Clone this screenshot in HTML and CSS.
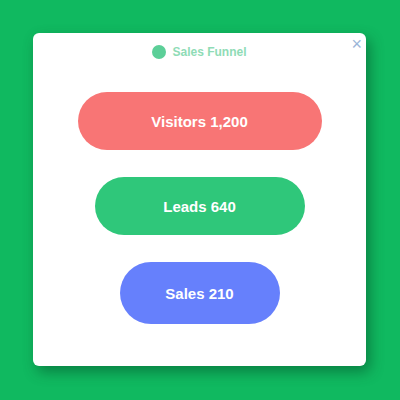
FILE: index.html
```html
<!DOCTYPE html>
<html>
<head>
<meta charset="utf-8">
<link rel="stylesheet" href="styles.css">
</head>
<body>
<div class="frame">
  <div class="card">
    <div class="header">
      <span class="title"><span class="dot"></span>Sales Funnel</span>
      <span class="close">×</span>
    </div>
    <div class="funnel">
      <div class="bar bar-red">Visitors 1,200</div>
      <div class="bar bar-green">Leads 640</div>
      <div class="bar bar-blue">Sales 210</div>
    </div>
  </div>
</div>
</body>
</html>
```
FILE: styles.css
```css
html, body {
  margin: 0;
  padding: 0;
}
body {
  width: 400px;
  height: 400px;
  background: #10b960;
  font-family: "Liberation Sans", Arial, sans-serif;
}
.frame {
  box-sizing: border-box;
  width: 400px;
  height: 400px;
  padding: 33px 34px 34px 33px;
}
.card {
  box-sizing: border-box;
  height: 100%;
  background: #ffffff;
  border-radius: 6px;
  box-shadow: 4px 6px 14px rgba(0, 60, 30, 0.45);
  display: flex;
  flex-direction: column;
  position: relative;
}
.header {
  height: 38px;
  display: flex;
  align-items: center;
  justify-content: center;
}
.title {
  display: flex;
  align-items: center;
  gap: 6px;
  color: #8fdcb6;
  font-size: 12px;
  font-weight: bold;
}
.dot {
  width: 14px;
  height: 14px;
  border-radius: 50%;
  background: #5ccf98;
}
.close {
  position: absolute;
  top: 2px;
  right: 4px;
  color: #9bb6d8;
  font-size: 18px;
  line-height: 18px;
}
.funnel {
  display: flex;
  flex-direction: column;
  align-items: center;
  gap: 27px;
  padding-top: 21px;
}
.bar {
  height: 58px;
  border-radius: 29px;
  display: flex;
  align-items: center;
  justify-content: center;
  color: #ffffff;
  font-size: 15px;
  font-weight: bold;
}
.bar-red {
  width: 244px;
  background: #f87575;
}
.bar-green {
  width: 210px;
  background: #2fc77a;
}
.bar-blue {
  width: 160px;
  height: 62px;
  border-radius: 31px;
  background: #6680fc;
}
```
